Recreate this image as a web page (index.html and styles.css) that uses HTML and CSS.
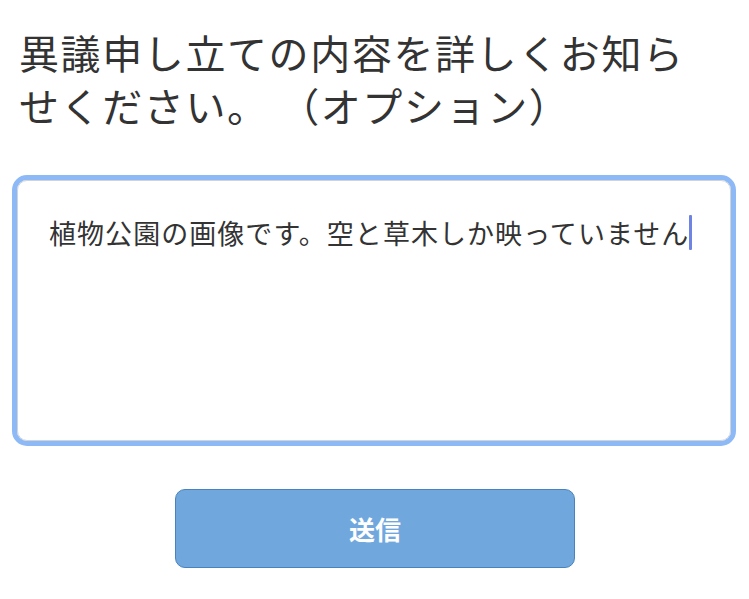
FILE: index.html
```html
<!DOCTYPE html>
<html lang="ja">
<head>
<meta charset="utf-8">
<title>異議申し立て</title>
<link rel="stylesheet" href="styles.css">
</head>
<body>
<main class="page">
  <h1 class="title">異議申し立ての内容を詳しくお知らせください。 （オプション）</h1>
  <div class="field">
    <div class="input">植物公園の画像です。空と草木しか映っていません<span class="caret"></span></div>
  </div>
  <div class="actions">
    <button class="submit" type="button">送信</button>
  </div>
</main>
</body>
</html>
```
FILE: styles.css
```css
html, body {
  margin: 0;
  padding: 0;
  background: #ffffff;
}

.page {
  font-family: "Noto Sans CJK JP", "Noto Sans", sans-serif;
  color: #333333;
  padding-top: 26px;
  text-spacing-trim: space-all;
}

.title {
  margin: 0;
  padding: 0 40px 0 19px;
  font-size: 40px;
  letter-spacing: 1.6px;
  line-height: 53px;
  font-weight: 400;
  color: #333333;
  text-spacing-trim: space-all;
}

.field {
  margin: 43px 13px 0 12px;
  height: 261px;
  border: 5px solid #8db9f6;
  border-radius: 15px;
}

.input {
  box-sizing: border-box;
  height: 100%;
  border: 1px solid #cfd3da;
  border-radius: 10px;
  padding: 34px 20px 0 31px;
  font-size: 27px;
  letter-spacing: 1.05px;
  line-height: 36px;
  color: #333333;
  white-space: nowrap;
  text-spacing-trim: space-all;
}

.caret {
  display: inline-block;
  width: 3px;
  height: 35px;
  margin-left: 0;
  vertical-align: top;
  border-radius: 1px;
  background: #6f84e2;
}

.actions {
  display: flex;
  justify-content: center;
  padding-top: 43px;
}

.submit {
  box-sizing: border-box;
  width: 400px;
  height: 79px;
  margin-left: 1px;
  background: #70a8de;
  border: 1.5px solid #4a82bd;
  border-radius: 10px;
  color: #ffffff;
  font-family: "Noto Sans CJK JP", "Noto Sans", sans-serif;
  font-size: 26px;
  font-weight: 700;
  padding: 0;
}
```
